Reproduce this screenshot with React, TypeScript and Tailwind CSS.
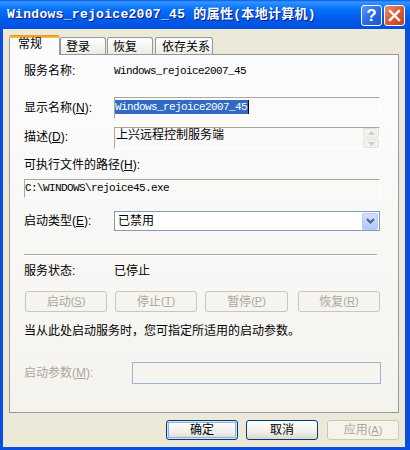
import React from "react";

function Etched({ className, children }: { className?: string; children?: React.ReactNode }) {
  return (
    <div
      className={
        "border border-t-[#ACA899] border-l-[#ACA899] border-r-white border-b-white " + (className ?? "")
      }
    >
      {children}
    </div>
  );
}

function DisabledBtn({ w, label, m }: { w: string; label: string; m: string }) {
  return (
    <div
      className={
        w +
        " h-full rounded-[3px] border border-[#C9C7BA] bg-[#F5F4EF] flex items-center justify-center text-[#ACA899]"
      }
    >
      {label}
      <span className="text-[11px]">(</span>
      <span className="underline text-[11px]">{m}</span>
      <span className="text-[11px]">)</span>
    </div>
  );
}

export default function App() {
  return (
    <div className="w-[410px] h-[450px] bg-[#0A4FDF] flex flex-col font-['Liberation_Sans','Noto_Sans_CJK_SC',sans-serif] text-[12px] text-black select-none overflow-hidden">
      {/* title bar */}
      <div className="h-[29px] shrink-0 flex items-start pr-[5px] bg-[linear-gradient(to_bottom,#0058EE_0%,#3D95FF_7%,#2A8CFF_12%,#157DFF_22%,#036EFC_35%,#0264F0_50%,#0059E8_70%,#0055E5_85%,#0050DC_100%)]">
        <div className="mt-[6px] ml-[7px] text-white font-bold text-[13px] leading-[17px] tracking-[0.3px] font-['Liberation_Mono','Noto_Sans_CJK_SC',monospace] [text-shadow:1px_1px_0_#0A1883] whitespace-nowrap">
          Windows_rejoice2007_45 的属性(本地计算机)
        </div>
        <div className="ml-auto mt-[5px] flex gap-[2px]">
          <div className="w-[21px] h-[21px] rounded-[3px] border border-white bg-[linear-gradient(135deg,#5C97F7_0%,#2C6AE6_50%,#1E55D3_100%)] flex items-center justify-center text-white font-bold text-[17px] leading-none font-['Liberation_Sans',sans-serif]">
            ?
          </div>
          <div className="w-[21px] h-[21px] rounded-[3px] border border-white bg-[linear-gradient(135deg,#EE8E6B_0%,#DB5A34_50%,#C4401E_100%)] flex items-center justify-center">
            <svg width="13" height="13" viewBox="0 0 13 13">
              <path d="M2 2 L11 11 M11 2 L2 11" stroke="white" strokeWidth="2.4" strokeLinecap="square" />
            </svg>
          </div>
        </div>
      </div>

      {/* body */}
      <div className="flex-1 ml-[3px] mr-[5px] mb-[3px] bg-[#ECE9D8] flex flex-col px-[6px] pt-[6px]">
        {/* tabs */}
        <div className="h-[19px] flex items-end shrink-0">
          <div className="relative z-10 w-[51px] h-[20px] mb-[-1px] flex flex-col">
            <div className="h-[3px] rounded-t-[3px] bg-[linear-gradient(to_bottom,#E68B2C,#FFC73C)]"></div>
            <div className="flex-1 border-l border-r border-[#919B9C] bg-[#FCFCFE] pl-[8px] leading-[12px]">常规</div>
          </div>
          <div className="w-[46px] h-[17px] border-t border-l border-r border-[#919B9C] rounded-t-[3px] bg-[linear-gradient(to_bottom,#FFFFFF,#ECEBE6)] pl-[5px] pt-[3px] leading-[12px]">
            登录
          </div>
          <div className="ml-[1px] w-[46px] h-[17px] border-t border-l border-r border-[#919B9C] rounded-t-[3px] bg-[linear-gradient(to_bottom,#FFFFFF,#ECEBE6)] pl-[5px] pt-[3px] leading-[12px]">
            恢复
          </div>
          <div className="ml-[2px] w-[58px] h-[17px] border-t border-l border-r border-[#919B9C] rounded-t-[3px] bg-[linear-gradient(to_bottom,#FFFFFF,#ECEBE6)] pl-[6px] pt-[3px] leading-[12px]">
            依存关系
          </div>
        </div>

        {/* panel */}
        <div className="h-[359px] shrink-0 border border-[#919B9C] bg-[linear-gradient(to_bottom,#FCFCFE,#F4F3EE)] flex flex-col pl-[14px]">
          {/* service name */}
          <div className="mt-[8px] h-[16px] flex items-center">
            <div className="w-[90px]">服务名称:</div>
            <div className="font-['Liberation_Mono',monospace] text-[11px] tracking-[-0.6px]">Windows_rejoice2007_45</div>
          </div>

          {/* display name */}
          <div className="mt-[18px] h-[22px] flex items-center">
            <div className="w-[90px]">
              显示名称(<span className="underline">N</span>):
            </div>
            <Etched className="w-[266px] h-full pt-[2px] flex items-start">
              <span className="bg-[#316AC5] text-white leading-[14px] font-['Liberation_Mono',monospace] text-[11px] tracking-[-0.6px] pr-[1px]">
                Windows_rejoice2007_45
              </span>
              <span className="w-[1px] h-[14px] bg-black"></span>
            </Etched>
          </div>

          {/* description */}
          <div className="mt-[8px] h-[22px] flex items-start">
            <div className="w-[90px] mt-[2px] leading-[16px]">
              描述(<span className="underline">D</span>):
            </div>
            <Etched className="w-[266px] h-full flex">
              <div className="flex-1 leading-[14px] pl-[1px]">上兴远程控制服务端</div>
              <div className="w-[16px] flex flex-col gap-[1px]">
                <div className="h-[10px] rounded-[2px] border border-[#E3E1D8] bg-[#F3F2EC] flex items-center justify-center">
                  <svg width="7" height="4" viewBox="0 0 7 4">
                    <path d="M0 4 L3.5 0 L7 4 Z" fill="#CFCDC4" />
                  </svg>
                </div>
                <div className="h-[9px] rounded-[2px] border border-[#E3E1D8] bg-[#F3F2EC] flex items-center justify-center">
                  <svg width="7" height="4" viewBox="0 0 7 4">
                    <path d="M0 0 L3.5 4 L7 0 Z" fill="#CFCDC4" />
                  </svg>
                </div>
              </div>
            </Etched>
          </div>

          {/* path label */}
          <div className="mt-[8px] h-[16px] flex items-center">
            可执行文件的路径(<span className="underline">H</span>):
          </div>
          <Etched className="mt-[6px] h-[19px] w-[356px] pt-[1px] leading-[14px] font-['Liberation_Mono',monospace] text-[11px] tracking-[-0.6px]">
            C:\WINDOWS\rejoice45.exe
          </Etched>

          {/* startup type */}
          <div className="mt-[13px] h-[20px] flex items-center">
            <div className="w-[90px]">
              启动类型(<span className="underline">E</span>):
            </div>
            <div className="w-[266px] h-full border border-[#7F9DB9] bg-white flex items-center">
              <div className="flex-1 pl-[3px]">已禁用</div>
              <div className="w-[16px] h-[17px] mr-[1px] rounded-[2px] border border-[#B6C9F4] bg-[linear-gradient(to_bottom,#D4E0FC,#B2C7F7)] flex items-center justify-center">
                <svg width="9" height="6" viewBox="0 0 9 6">
                  <path d="M1 1 L4.5 4.5 L8 1" stroke="#4D6185" strokeWidth="2" fill="none" />
                </svg>
              </div>
            </div>
          </div>

          {/* separator */}
          <div className="mt-[23px] w-[353px] h-[2px] border-t border-[#ACA899] border-b border-b-white"></div>

          {/* status */}
          <div className="mt-[7px] h-[16px] flex items-center">
            <div className="w-[90px]">服务状态:</div>
            <div>已停止</div>
          </div>

          {/* service buttons */}
          <div className="mt-[12px] h-[21px] flex ml-[1px] gap-[8px]">
            <DisabledBtn w="w-[82px]" label="启动" m="S" />
            <DisabledBtn w="w-[82px]" label="停止" m="T" />
            <DisabledBtn w="w-[83px]" label="暂停" m="P" />
            <div className="ml-[2px] h-full flex">
              <DisabledBtn w="w-[82px]" label="恢复" m="R" />
            </div>
          </div>

          <div className="mt-[11px] h-[16px] flex items-center">当从此处启动服务时，您可指定所适用的启动参数。</div>

          {/* start params */}
          <div className="mt-[23px] h-[22px] flex items-center">
            <div className="w-[108px] text-[#ACA899]">
              启动参数(<span className="underline">M</span>):
            </div>
            <div className="w-[249px] h-full border border-[#9EB3CE] bg-[#F5F4EF]"></div>
          </div>
        </div>

        {/* dialog buttons */}
        <div className="mt-[7px] h-[20px] flex justify-end gap-[8px] shrink-0">
          <div className="w-[72px] h-full rounded-[3px] border border-[#003C74] bg-[linear-gradient(to_bottom,#FFFFFF,#F0F0EA_60%,#DCD8CC)] shadow-[inset_0_0_0_1px_#CEE7FF,inset_0_0_0_2px_#8FAEEA] flex items-center justify-center">
            确定
          </div>
          <div className="w-[72px] h-full rounded-[3px] border border-[#003C74] bg-[linear-gradient(to_bottom,#FFFFFF,#F0F0EA_60%,#DCD8CC)] flex items-center justify-center">
            取消
          </div>
          <div className="ml-[1px] w-[72px] h-full rounded-[3px] border border-[#C9C7BA] bg-[#F5F4EA] flex items-center justify-center text-[#ACA899]">
            应用<span className="text-[11px]">(</span>
            <span className="underline text-[11px]">A</span>
            <span className="text-[11px]">)</span>
          </div>
        </div>
      </div>
    </div>
  );
}
